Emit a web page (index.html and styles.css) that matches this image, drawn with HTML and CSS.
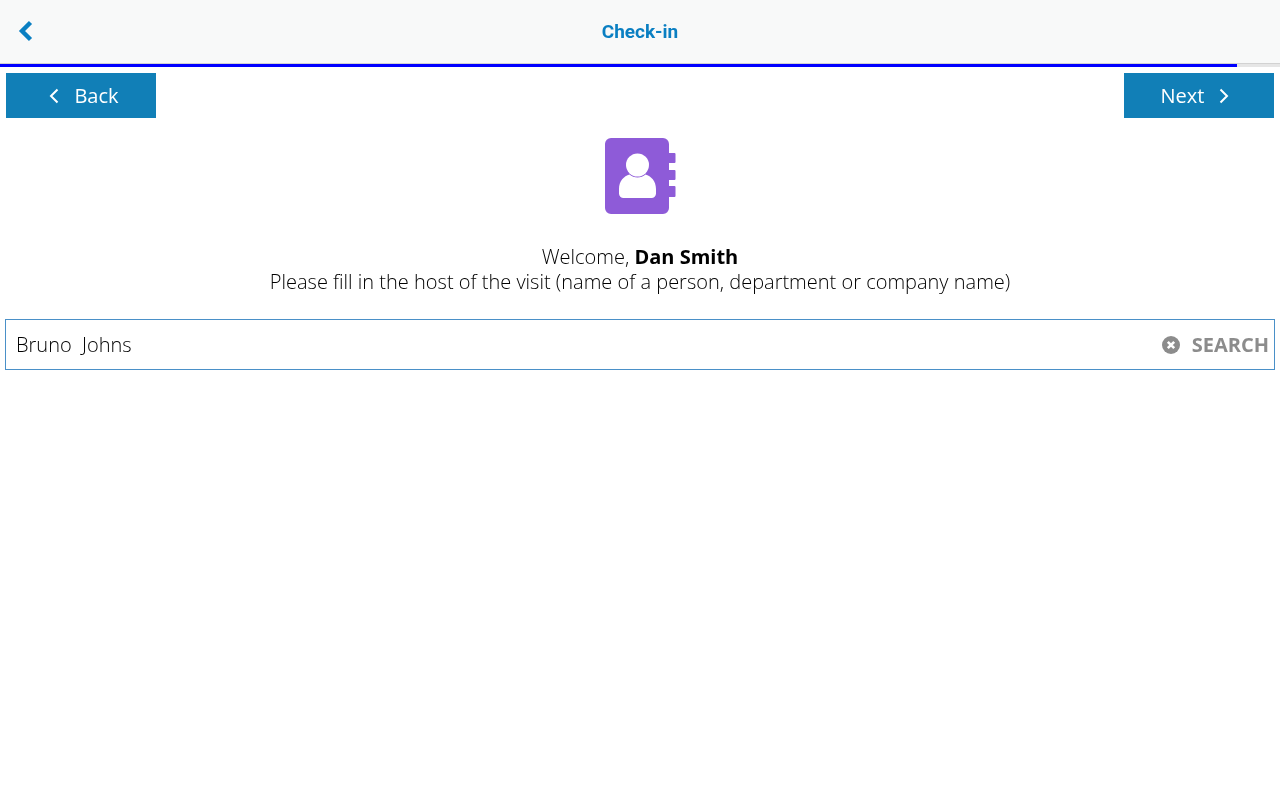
FILE: index.html
```html
<!DOCTYPE html>
<html lang="en">
<head>
<meta charset="utf-8">
<title>Check-in</title>
<link rel="stylesheet" href="styles.css">
</head>
<body>
<div class="page">
<header class="topbar">
  <svg class="topbar-back" width="16" height="22" viewBox="0 0 16 22"><path d="M12.5 2.500 4 11l8.500 8.500" fill="none" stroke="#0a7fc2" stroke-width="4.400"/></svg>
  <h1 class="topbar-title">Check-in</h1>
</header>
<div class="progress"><div class="progress-fill"></div></div>
<nav class="wizard-nav">
  <button class="nav-btn nav-back"><svg class="chev" width="10" height="16" viewBox="0 0 10 16"><path d="M8.500 1.500 2 8l6.500 6.500" fill="none" stroke="#fff" stroke-width="2"/></svg><span>Back</span></button>
  <button class="nav-btn nav-next"><span>Next</span><svg class="chev" width="10" height="16" viewBox="0 0 10 16"><path d="M1.500 1.500 8 8l-6.500 6.500" fill="none" stroke="#fff" stroke-width="2"/></svg></button>
</nav>
<main class="content">
  <svg class="book" width="72" height="78" viewBox="0 0 72 78">
    <path fill="#8e5bd8" d="M7 1h52a6 6 0 0 1 6 6v9h5.500a1 1 0 0 1 1 1v8a1 1 0 0 1-1 1H65v7h5.500a1 1 0 0 1 1 1v8a1 1 0 0 1-1 1H65v6h5.500a1 1 0 0 1 1 1v9a1 1 0 0 1-1 1H65v11a6 6 0 0 1-6 6H7a6 6 0 0 1-6-6V7a6 6 0 0 1 6-6Z"/>
    <circle cx="33.500" cy="28" r="11.500" fill="#fff"/>
    <path fill="#fff" d="M15 52c0-8 5-13 10.500-14.500 2 2 5 3 8 3s6-1 8-3C47 39 52 44 52 52v4.500a4.500 4.500 0 0 1-4.500 4.500h-28a4.500 4.500 0 0 1-4.500-4.500Z"/>
  </svg>
  <p class="welcome">Welcome, <strong>Dan Smith</strong><br>Please fill in the host of the visit (name of a person, department or company name)</p>
  <div class="search">
    <span class="search-value">Bruno&nbsp; Johns</span>
    <svg class="clear" width="18" height="18" viewBox="0 0 18 18"><circle cx="9" cy="9" r="9" fill="#8c8c8c"/><path d="m5.800 5.800 6.400 6.400m0-6.400-6.400 6.400" stroke="#fff" stroke-width="2.600"/></svg>
    <span class="search-btn">SEARCH</span>
  </div>
</main>
</div>
</body>
</html>
```
FILE: styles.css
```css
* { box-sizing: border-box; }
html, body { margin: 0; height: 100%; }
body { font-family: "Open Sans", sans-serif; color: #000; }
.page { min-height: 100%; will-change: transform; }
.topbar { height: 64px; background: #f8f9f9; border-bottom: 1px solid #d2d2d2; display: flex; align-items: center; justify-content: center; position: relative; }
.topbar-back { position: absolute; left: 18px; top: 20px; }
.topbar-title { margin: 0; font: 700 19px/1 Roboto, sans-serif; color: #0a7fc2; }
.progress { height: 3px; background: #e6e6e6; }
.progress-fill { height: 100%; width: 1237px; background: #0000ff; }
.wizard-nav { display: flex; justify-content: space-between; padding: 6px 6px 0; }
.nav-btn { width: 150px; height: 45px; border: 0; padding: 0; background: #117fb7; color: #fff; font: 400 20px/1 "Open Sans", sans-serif; display: flex; align-items: center; justify-content: center; gap: 15px; }
.nav-back { padding-left: 6px; }
.nav-next { padding-right: 8px; }
.content { display: flex; flex-direction: column; align-items: center; padding: 19px 5px 0; }
.book { display: block; }
.welcome { margin: 29px 0 0; font-size: 20px; line-height: 25px; font-weight: 300; text-align: center; }
.welcome strong { font-weight: 700; }
.search { margin-top: 25px; width: 100%; height: 51px; border: 1px solid #4a90c8; display: flex; align-items: center; padding: 0 5px 0 10px; }
.search-value { flex: 1; font-size: 20px; font-weight: 300; }
.clear { margin-right: 12px; }
.search-btn { font-size: 20px; font-weight: 700; color: #8c8c8c; }
```
